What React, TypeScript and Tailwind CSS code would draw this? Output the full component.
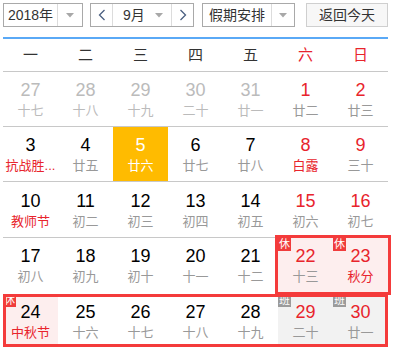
import React from "react";

type Day = {
  n: number;
  lunar: string;
  muted?: boolean; // previous month
  redNum?: boolean;
  redLunar?: boolean;
  today?: boolean;
  bg?: "pink" | "gray";
  badge?: "休" | "班";
};

const WEEK = ["一", "二", "三", "四", "五", "六", "日"];

const ROWS: Day[][] = [
  [
    { n: 27, lunar: "十七", muted: true },
    { n: 28, lunar: "十八", muted: true },
    { n: 29, lunar: "十九", muted: true },
    { n: 30, lunar: "二十", muted: true },
    { n: 31, lunar: "廿一", muted: true },
    { n: 1, lunar: "廿二", redNum: true },
    { n: 2, lunar: "廿三", redNum: true },
  ],
  [
    { n: 3, lunar: "抗战胜...", redLunar: true },
    { n: 4, lunar: "廿五" },
    { n: 5, lunar: "廿六", today: true },
    { n: 6, lunar: "廿七" },
    { n: 7, lunar: "廿八" },
    { n: 8, lunar: "白露", redNum: true, redLunar: true },
    { n: 9, lunar: "三十", redNum: true },
  ],
  [
    { n: 10, lunar: "教师节", redLunar: true },
    { n: 11, lunar: "初二" },
    { n: 12, lunar: "初三" },
    { n: 13, lunar: "初四" },
    { n: 14, lunar: "初五" },
    { n: 15, lunar: "初六", redNum: true },
    { n: 16, lunar: "初七", redNum: true },
  ],
  [
    { n: 17, lunar: "初八" },
    { n: 18, lunar: "初九" },
    { n: 19, lunar: "初十" },
    { n: 20, lunar: "十一" },
    { n: 21, lunar: "十二" },
    { n: 22, lunar: "十三", redNum: true, bg: "pink", badge: "休" },
    { n: 23, lunar: "秋分", redNum: true, redLunar: true, bg: "pink", badge: "休" },
  ],
  [
    { n: 24, lunar: "中秋节", redLunar: true, bg: "pink", badge: "休" },
    { n: 25, lunar: "十六" },
    { n: 26, lunar: "十七" },
    { n: 27, lunar: "十八" },
    { n: 28, lunar: "十九" },
    { n: 29, lunar: "二十", redNum: true, bg: "gray", badge: "班" },
    { n: 30, lunar: "廿一", redNum: true, bg: "gray", badge: "班" },
  ],
];

const FONT = { fontFamily: '"Liberation Sans", Arial, "Noto Sans CJK SC", sans-serif' };

function Caret() {
  return (
    <svg width="8" height="5" viewBox="0 0 8 5">
      <path d="M0 0 H8 L4 4.5 Z" fill="#a8a8a8" />
    </svg>
  );
}

function Chevron({ dir }: { dir: "l" | "r" }) {
  return (
    <svg width="8" height="12" viewBox="0 0 8 12">
      <path
        d={dir === "l" ? "M6.5 1 L1.5 6 L6.5 11" : "M1.5 1 L6.5 6 L1.5 11"}
        fill="none"
        stroke="#4a5f80"
        strokeWidth="1.3"
      />
    </svg>
  );
}

function Cell({ d }: { d: Day }) {
  const bg = d.today
    ? "bg-[#ffbb00]"
    : d.bg === "pink"
      ? "bg-[#fdeeee]"
      : d.bg === "gray"
        ? "bg-[#f2f2f2]"
        : "";
  const numColor = d.today
    ? "text-white"
    : d.muted
      ? "text-[#bbbbbb]"
      : d.redNum
        ? "text-[#e8242c]"
        : "text-black";
  const lunarColor = d.today
    ? "text-white"
    : d.muted
      ? "text-[#bbbbbb]"
      : d.redLunar
        ? "text-[#e8242c]"
        : "text-[#999999]";

  return (
    <div className={`relative w-[55px] h-full flex flex-col items-center justify-center ${bg}`}>
      {d.badge && (
        <span
          className={`absolute left-0 top-0 w-[13px] h-[13px] flex items-center justify-center text-[11px] leading-none text-white ${
            d.badge === "休" ? "bg-[#f03c3c]" : "bg-[#9b9b9b]"
          }`}
        >
          {d.badge}
        </span>
      )}
      <span className={`text-[18px] leading-[22px] ${numColor}`}>{d.n}</span>
      <span className={`text-[13px] leading-[17px] mt-[1px] ${lunarColor}`}>{d.lunar}</span>
    </div>
  );
}

export default function App() {
  return (
    <div className="w-[395px] h-[355px] bg-white overflow-hidden" style={FONT}>
      {/* toolbar */}
      <div className="flex items-center h-[24px] mt-[3px] ml-[3px] text-[14px] text-[#333]">
        <div className="flex h-full w-[80px] border border-[#a9a9a9]">
          <div className="flex-1 flex items-center justify-center border-r border-[#dcdcdc]">2018年</div>
          <div className="w-[24px] flex items-center justify-center">
            <Caret />
          </div>
        </div>

        <div className="flex h-full w-[104px] ml-[7px] border border-[#a9a9a9]">
          <div className="w-[22px] flex items-center justify-center border-r border-[#dcdcdc]">
            <Chevron dir="l" />
          </div>
          <div className="flex-1 flex items-center pl-[10px] pr-[8px] justify-between">
            <span>9月</span>
            <Caret />
          </div>
          <div className="w-[22px] flex items-center justify-center border-l border-[#dcdcdc]">
            <Chevron dir="r" />
          </div>
        </div>

        <div className="flex h-full w-[93px] ml-[8px] border border-[#a9a9a9]">
          <div className="flex-1 flex items-center justify-center border-r border-[#dcdcdc]">假期安排</div>
          <div className="w-[22px] flex items-center justify-center">
            <Caret />
          </div>
        </div>

        <div className="flex h-full w-[82px] ml-[11px] items-center justify-center border border-[#cfcfcf] bg-[#f7f7f7]">
          返回今天
        </div>
      </div>

      {/* calendar */}
      <div className="mx-[3px] mt-[10px] w-[385px] border-t-2 border-[#5aa9f6]">
        <div className="flex h-[33px] border-b border-[#c8c8c8]">
          {WEEK.map((w, i) => (
            <div
              key={w}
              className={`w-[55px] flex items-center justify-center text-[15px] ${
                i >= 5 ? "text-[#e8242c]" : "text-[#333]"
              }`}
            >
              {w}
            </div>
          ))}
        </div>

        {ROWS.slice(0, 3).map((row, ri) => (
          <div key={ri} className={`flex h-[55px] ${ri < 2 ? "border-b border-[#c8c8c8]" : ""}`}>
            {row.map((d, i) => (
              <Cell key={i} d={d} />
            ))}
          </div>
        ))}

        <div className="flex h-[55px] border-t border-[#c8c8c8]">
          {ROWS[3].slice(0, 5).map((d, i) => (
            <Cell key={i} d={d} />
          ))}
          <div className="flex h-full ring-[3px] ring-[#f43b3b]">
            {ROWS[3].slice(5).map((d, i) => (
              <Cell key={i} d={d} />
            ))}
          </div>
        </div>

        <div className="relative flex h-[53px] mt-[2px]">
          {ROWS[4].map((d, i) => (
            <Cell key={i} d={d} />
          ))}
          {/* red frame drawn over the cells */}
          <div className="pointer-events-none absolute inset-0 border-[3px] border-[#f43b3b]" />
        </div>
      </div>
    </div>
  );
}
